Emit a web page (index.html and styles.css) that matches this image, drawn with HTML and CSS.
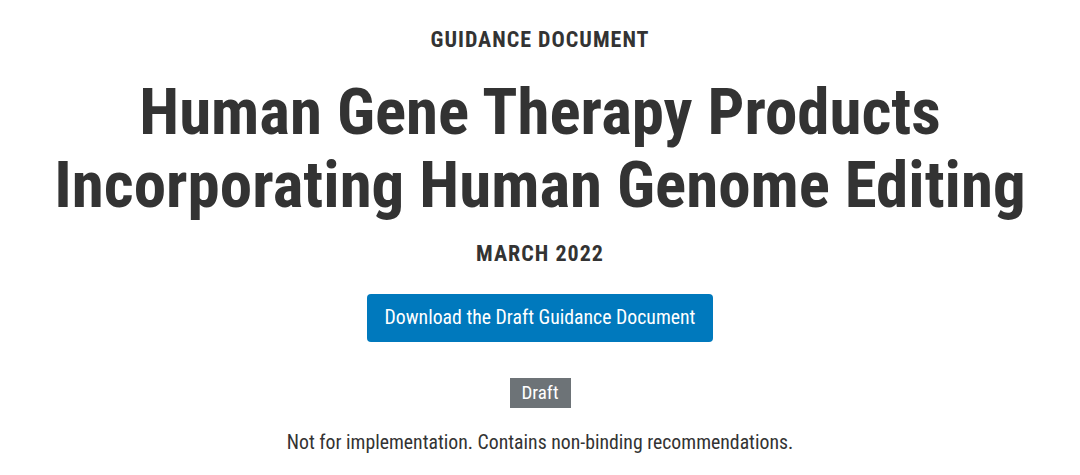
FILE: index.html
```html
<!doctype html>
<html>
  <head>
    <meta charset=utf-8>
    <title>Human Gene Therapy Products Incorporating Human Genome Editing</title>
    <link rel="stylesheet" href="styles.css">
  </head>
  <body>
    <div class="hero">
      <p class="kicker">Guidance Document</p>
      <h1 class="title">Human Gene Therapy Products Incorporating Human Genome Editing</h1>
      <p class="date">March 2022</p>
      <a class="btn" href="##">Download the Draft Guidance Document</a>
      <span class="badge">Draft</span>
      <p class="note">Not for implementation. Contains non-binding recommendations.</p>
    </div>
  </body>
</html>
```

FILE: styles.css
```css
*{
  box-sizing:border-box;
}
body{
  margin:0;
  background:#fff;
  color:#333;
  font-family:"Roboto Condensed", Roboto, "Liberation Sans", sans-serif;
  font-stretch:condensed;
}
.hero{
  display:flex;
  flex-direction:column;
  align-items:center;
  text-align:center;
  padding-top:26px;
}
.kicker{
  margin:0;
  font-size:22px;
  font-weight:700;
  text-transform:uppercase;
  letter-spacing:1px;
  line-height:28px;
}
.title{
  margin:22px 0 0;
  width:1000px;
  font-size:65px;
  font-weight:700;
  line-height:73px;
}
.date{
  margin:18px 0 0;
  font-size:22px;
  font-weight:700;
  text-transform:uppercase;
  letter-spacing:1px;
  line-height:28px;
}
.btn{
  margin-top:26px;
  display:inline-block;
  padding:12px 18px;
  background:#0079bd;
  color:#fff;
  border-radius:4px;
  font-size:19.75px;
  line-height:24px;
  text-decoration:none;
}
.badge{
  margin-top:36px;
  display:inline-block;
  padding:3px 12px;
  background:#6d7377;
  color:#fff;
  font-size:19px;
  line-height:24px;
}
.note{
  margin:23px 0 0;
  font-size:19.75px;
  line-height:24px;
}
```
